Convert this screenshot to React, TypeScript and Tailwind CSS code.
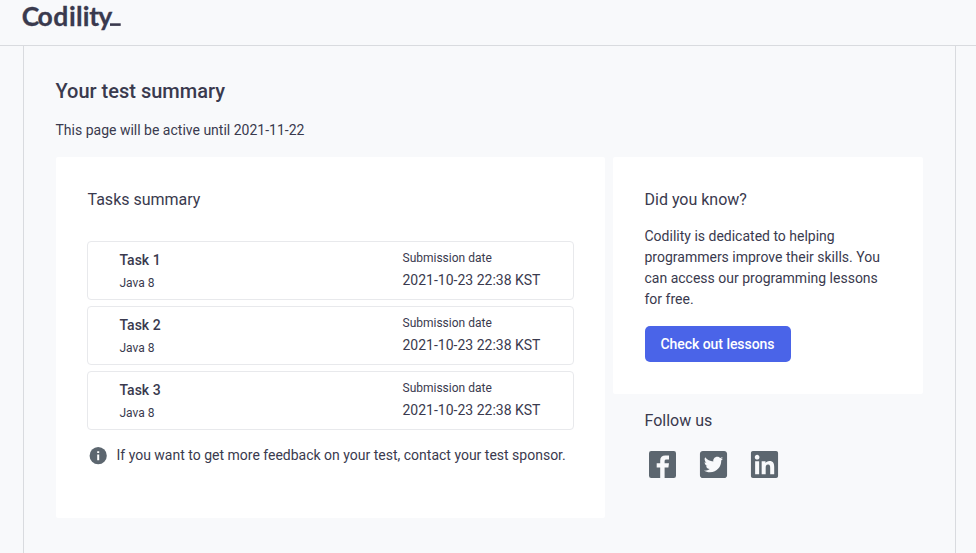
import { FaLinkedin, FaTwitterSquare } from "react-icons/fa";

const tasks = [
  { name: "Task 1", language: "Java 8", submitted: "2021-10-23 22:38 KST" },
  { name: "Task 2", language: "Java 8", submitted: "2021-10-23 22:38 KST" },
  { name: "Task 3", language: "Java 8", submitted: "2021-10-23 22:38 KST" },
];

function Logo() {
  return (
    <svg width="102" height="36" viewBox="0 0 102 36" fill="#3a3a4e" role="img" aria-label="Codility">
      <text
        x="-0.2 15.5 31.2 47 53.9 60.7 67.2 76.3"
        y="26.4"
        className="font-['Lato',sans-serif] text-[26.5px] font-bold"
        stroke="#3a3a4e"
        strokeWidth="0.3"
      >
        Codility
      </text>
      <rect x="88" y="23.3" width="10.7" height="2.6" />
    </svg>
  );
}

function FacebookIcon() {
  return (
    <svg width="27" height="27" viewBox="0 0 27 27">
      <rect width="27" height="27" rx="2.2" fill="#5c666f" />
      <path
        d="M11.2 27V16.4H7.7V12.3H11.2V9.6C11.2 6.3 13.1 4.6 16.2 4.6H20V8.4H17.7C16.1 8.4 15.6 9 15.6 10.2V12.3H20L19.4 16.4H15.6V27Z"
        fill="#f8f9fb"
      />
    </svg>
  );
}

function InfoIcon() {
  return (
    <svg width="18" height="18" viewBox="0 0 18 18">
      <circle cx="9.2" cy="8.7" r="8.6" fill="#5c666f" />
      <path d="M8.2 4.2H10.2V6.1H8.2ZM8.2 7.4H10.2V13.2H8.2Z" fill="#fff" />
    </svg>
  );
}

function TaskRow({ name, language, submitted }: { name: string; language: string; submitted: string }) {
  return (
    <li className="flex h-[59px] rounded-[4px] border border-[#e8e9ec] pl-[31.5px]">
      <div className="w-[283px] pt-[8px]">
        <div className="text-[14px] leading-[21px] font-medium">{name}</div>
        <div className="mt-[3px] text-[12px] leading-[18px]">{language}</div>
      </div>
      <div className="pt-[7px]">
        <div className="text-[12px] leading-[18px]">Submission date</div>
        <div className="mt-[3px] text-[14px] leading-[21px]">{submitted}</div>
      </div>
    </li>
  );
}

export default function App() {
  return (
    <div className="flex h-[553px] flex-col overflow-hidden bg-[#f8f9fb] font-['Roboto',sans-serif] text-[#3a3a4e]">
      <header className="h-[46px] border-b border-[#d9dbdf] pl-[22px]">
        <Logo />
      </header>
      <main className="ml-[23px] w-[933px] flex-1 border-x border-[#d9dbdf] pl-[32px]">
        <h1 className="-ml-[0.5px] pt-[30px] text-[20px] leading-[30px] font-medium">Your test summary</h1>
        <p className="-ml-[0.5px] mt-[14px] text-[14px] leading-[21px]">This page will be active until 2021-11-22</p>
        <div className="mt-[16px] flex items-start gap-2">
          <section className="h-[361px] w-[549px] rounded-[2px] bg-white pt-[31px] pl-[31px]">
            <h2 className="pl-[0.5px] text-[16px] leading-[24px]">Tasks summary</h2>
            <ul className="mt-[29px] flex w-[487px] flex-col gap-[6px]">
              {tasks.map((task) => (
                <TaskRow key={task.name} {...task} />
              ))}
            </ul>
            <div className="mt-[15px] flex items-center pl-[2px] text-[14px] leading-[21px]">
              <InfoIcon />
              <span className="ml-[9.5px]">If you want to get more feedback on your test, contact your test sponsor.</span>
            </div>
          </section>
          <aside className="w-[310px]">
            <section className="h-[237px] rounded-[2px] bg-white pt-[31px] pl-[31.5px]">
              <h2 className="text-[16px] leading-[24px]">Did you know?</h2>
              <p className="mt-[14px] w-[247px] text-[14px] leading-[21px]">
                Codility is dedicated to helping programmers improve their skills. You can access our programming lessons
                for free.
              </p>
              <button className="mt-[16px] ml-[0.5px] h-[36px] w-[146px] rounded-[5px] bg-[#4a64e8] pr-[1px] text-[14px] leading-[21px] font-medium tracking-[-0.05px] text-white">
                Check out lessons
              </button>
            </section>
            <h2 className="mt-[15px] pl-[31.5px] text-[16px] leading-[24px]">Follow us</h2>
            <div className="mt-[16px] flex items-center pl-[36px] text-[31px] text-[#5c666f]">
              <FacebookIcon />
              <FaTwitterSquare className="ml-[22px]" />
              <FaLinkedin className="ml-5" />
            </div>
          </aside>
        </div>
      </main>
    </div>
  );
}
